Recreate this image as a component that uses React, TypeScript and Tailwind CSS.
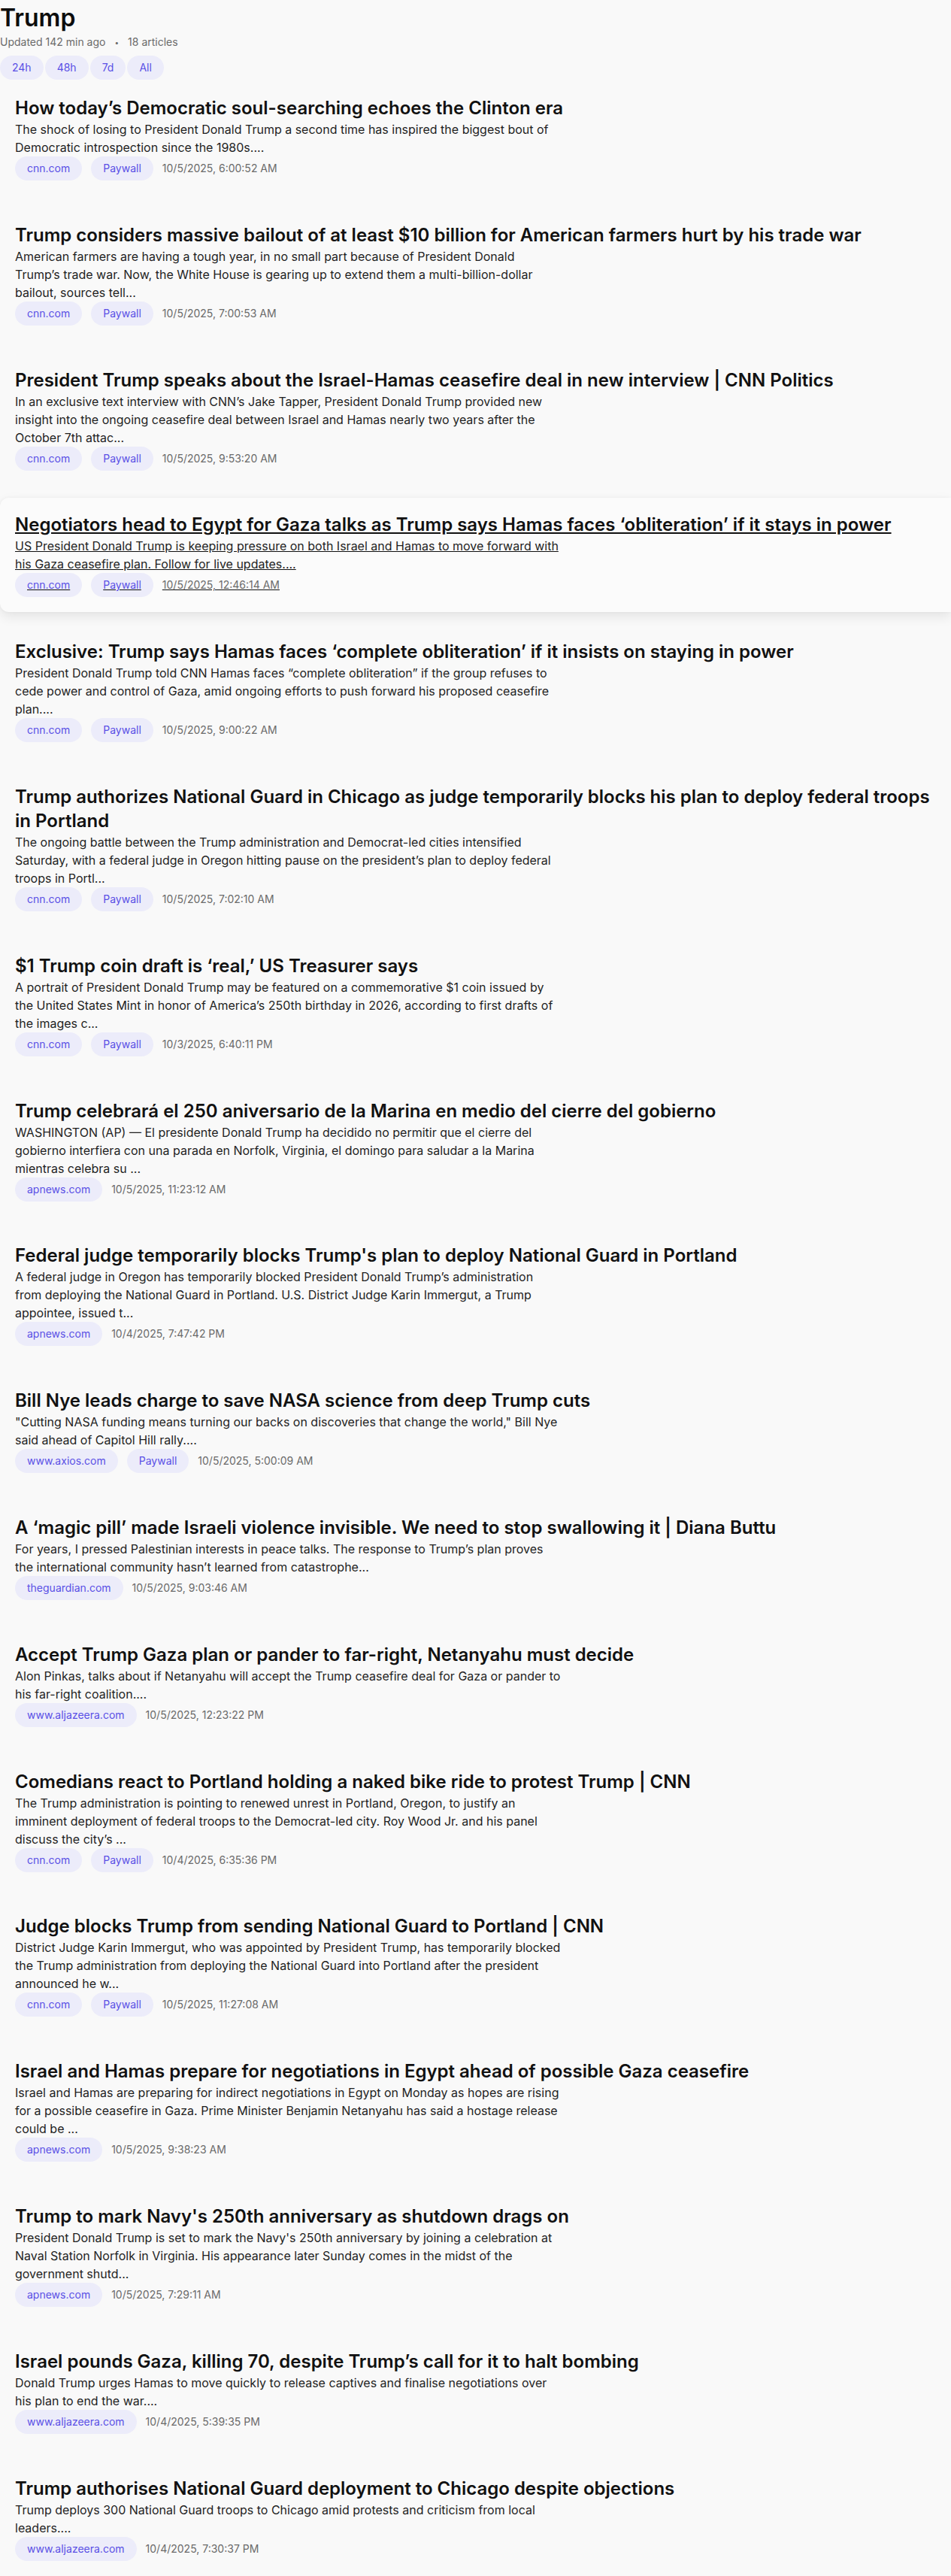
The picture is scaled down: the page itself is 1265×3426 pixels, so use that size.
import React from "react";

type Article = {
  title: string;
  desc: string;
  source: string;
  paywall?: boolean;
  date: string;
  hover?: boolean;
};

const articles: Article[] = [
  {
    title: "How today’s Democratic soul-searching echoes the Clinton era",
    desc: "The shock of losing to President Donald Trump a second time has inspired the biggest bout of Democratic introspection since the 1980s....",
    source: "cnn.com",
    paywall: true,
    date: "10/5/2025, 6:00:52 AM",
  },
  {
    title: "Trump considers massive bailout of at least $10 billion for American farmers hurt by his trade war",
    desc: "American farmers are having a tough year, in no small part because of President Donald Trump’s trade war. Now, the White House is gearing up to extend them a multi-billion-dollar bailout, sources tell...",
    source: "cnn.com",
    paywall: true,
    date: "10/5/2025, 7:00:53 AM",
  },
  {
    title: "President Trump speaks about the Israel-Hamas ceasefire deal in new interview | CNN Politics",
    desc: "In an exclusive text interview with CNN’s Jake Tapper, President Donald Trump provided new insight into the ongoing ceasefire deal between Israel and Hamas nearly two years after the October 7th attac...",
    source: "cnn.com",
    paywall: true,
    date: "10/5/2025, 9:53:20 AM",
  },
  {
    title: "Negotiators head to Egypt for Gaza talks as Trump says Hamas faces ‘obliteration’ if it stays in power",
    desc: "US President Donald Trump is keeping pressure on both Israel and Hamas to move forward with his Gaza ceasefire plan. Follow for live updates....",
    source: "cnn.com",
    paywall: true,
    date: "10/5/2025, 12:46:14 AM",
    hover: true,
  },
  {
    title: "Exclusive: Trump says Hamas faces ‘complete obliteration’ if it insists on staying in power",
    desc: "President Donald Trump told CNN Hamas faces “complete obliteration” if the group refuses to cede power and control of Gaza, amid ongoing efforts to push forward his proposed ceasefire plan....",
    source: "cnn.com",
    paywall: true,
    date: "10/5/2025, 9:00:22 AM",
  },
  {
    title: "Trump authorizes National Guard in Chicago as judge temporarily blocks his plan to deploy federal troops in Portland",
    desc: "The ongoing battle between the Trump administration and Democrat-led cities intensified Saturday, with a federal judge in Oregon hitting pause on the president’s plan to deploy federal troops in Portl...",
    source: "cnn.com",
    paywall: true,
    date: "10/5/2025, 7:02:10 AM",
  },
  {
    title: "$1 Trump coin draft is ‘real,’ US Treasurer says",
    desc: "A portrait of President Donald Trump may be featured on a commemorative $1 coin issued by the United States Mint in honor of America’s 250th birthday in 2026, according to first drafts of the images c...",
    source: "cnn.com",
    paywall: true,
    date: "10/3/2025, 6:40:11 PM",
  },
  {
    title: "Trump celebrará el 250 aniversario de la Marina en medio del cierre del gobierno",
    desc: "WASHINGTON (AP) — El presidente Donald Trump ha decidido no permitir que el cierre del gobierno interfiera con una parada en Norfolk, Virginia, el domingo para saludar a la Marina mientras celebra su ...",
    source: "apnews.com",
    date: "10/5/2025, 11:23:12 AM",
  },
  {
    title: "Federal judge temporarily blocks Trump's plan to deploy National Guard in Portland",
    desc: "A federal judge in Oregon has temporarily blocked President Donald Trump’s administration from deploying the National Guard in Portland. U.S. District Judge Karin Immergut, a Trump appointee, issued t...",
    source: "apnews.com",
    date: "10/4/2025, 7:47:42 PM",
  },
  {
    title: "Bill Nye leads charge to save NASA science from deep Trump cuts",
    desc: "\"Cutting NASA funding means turning our backs on discoveries that change the world,\" Bill Nye said ahead of Capitol Hill rally....",
    source: "www.axios.com",
    paywall: true,
    date: "10/5/2025, 5:00:09 AM",
  },
  {
    title: "A ‘magic pill’ made Israeli violence invisible. We need to stop swallowing it | Diana Buttu",
    desc: "For years, I pressed Palestinian interests in peace talks. The response to Trump’s plan proves the international community hasn’t learned from catastrophe...",
    source: "theguardian.com",
    date: "10/5/2025, 9:03:46 AM",
  },
  {
    title: "Accept Trump Gaza plan or pander to far-right, Netanyahu must decide",
    desc: "Alon Pinkas, talks about if Netanyahu will accept the Trump ceasefire deal for Gaza or pander to his far-right coalition....",
    source: "www.aljazeera.com",
    date: "10/5/2025, 12:23:22 PM",
  },
  {
    title: "Comedians react to Portland holding a naked bike ride to protest Trump | CNN",
    desc: "The Trump administration is pointing to renewed unrest in Portland, Oregon, to justify an imminent deployment of federal troops to the Democrat-led city. Roy Wood Jr. and his panel discuss the city’s ...",
    source: "cnn.com",
    paywall: true,
    date: "10/4/2025, 6:35:36 PM",
  },
  {
    title: "Judge blocks Trump from sending National Guard to Portland | CNN",
    desc: "District Judge Karin Immergut, who was appointed by President Trump, has temporarily blocked the Trump administration from deploying the National Guard into Portland after the president announced he w...",
    source: "cnn.com",
    paywall: true,
    date: "10/5/2025, 11:27:08 AM",
  },
  {
    title: "Israel and Hamas prepare for negotiations in Egypt ahead of possible Gaza ceasefire",
    desc: "Israel and Hamas are preparing for indirect negotiations in Egypt on Monday as hopes are rising for a possible ceasefire in Gaza. Prime Minister Benjamin Netanyahu has said a hostage release could be ...",
    source: "apnews.com",
    date: "10/5/2025, 9:38:23 AM",
  },
  {
    title: "Trump to mark Navy's 250th anniversary as shutdown drags on",
    desc: "President Donald Trump is set to mark the Navy's 250th anniversary by joining a celebration at Naval Station Norfolk in Virginia. His appearance later Sunday comes in the midst of the government shutd...",
    source: "apnews.com",
    date: "10/5/2025, 7:29:11 AM",
  },
  {
    title: "Israel pounds Gaza, killing 70, despite Trump’s call for it to halt bombing",
    desc: "Donald Trump urges Hamas to move quickly to release captives and finalise negotiations over his plan to end the war....",
    source: "www.aljazeera.com",
    date: "10/4/2025, 5:39:35 PM",
  },
  {
    title: "Trump authorises National Guard deployment to Chicago despite objections",
    desc: "Trump deploys 300 National Guard troops to Chicago amid protests and criticism from local leaders....",
    source: "www.aljazeera.com",
    date: "10/4/2025, 7:30:37 PM",
  },
];

function Chip({ children }: { children: React.ReactNode }) {
  return (
    <span className="inline-flex items-center h-8 px-4 rounded-2xl bg-[#ececfa] text-[#5a50e6] text-sm">
      {children}
    </span>
  );
}

function Item({ a }: { a: Article }) {
  return (
    <a
      href="#"
      className={
        "block pl-5 pr-1 py-5 text-inherit " +
        (a.hover
          ? "underline rounded-l-xl bg-[#fbfbfb] shadow-[0_6px_16px_rgba(0,0,0,0.09),0_0_4px_rgba(0,0,0,0.04)]"
          : "no-underline")
      }
    >
      <h2 className="text-2xl leading-8 font-semibold text-[#111111]">{a.title}</h2>
      <p className="text-base leading-6 text-[#1f1f1f] max-w-[727px]">{a.desc}</p>
      <div className="flex items-center gap-3">
        <Chip>{a.source}</Chip>
        {a.paywall && <Chip>Paywall</Chip>}
        <span className="text-sm text-[#6b6b6b]">{a.date}</span>
      </div>
    </a>
  );
}

export default function App() {
  return (
    <div
      className="min-h-screen bg-[#f9f9f9] text-[#111] overflow-x-hidden"
      style={{ fontFamily: "Inter, 'Noto Sans', sans-serif" }}
    >
      <header className="pt-1">
        <h1 className="text-[32px] leading-[40px] font-semibold text-[#0d0d0d]">Trump</h1>
        <div className="mt-0.5 flex items-center gap-3 text-sm leading-5 text-[#6b6b6b]">
          <span>Updated 142 min ago</span>
          <span className="text-[10px]">•</span>
          <span>18 articles</span>
        </div>
        <div className="mt-2 flex items-center gap-0.5">
          <Chip>24h</Chip>
          <Chip>48h</Chip>
          <Chip>7d</Chip>
          <Chip>All</Chip>
        </div>
      </header>
      <main className="mt-0.5 flex flex-col gap-[16.8px] pb-4">
        {articles.map((a, i) => (
          <Item key={i} a={a} />
        ))}
      </main>
    </div>
  );
}
